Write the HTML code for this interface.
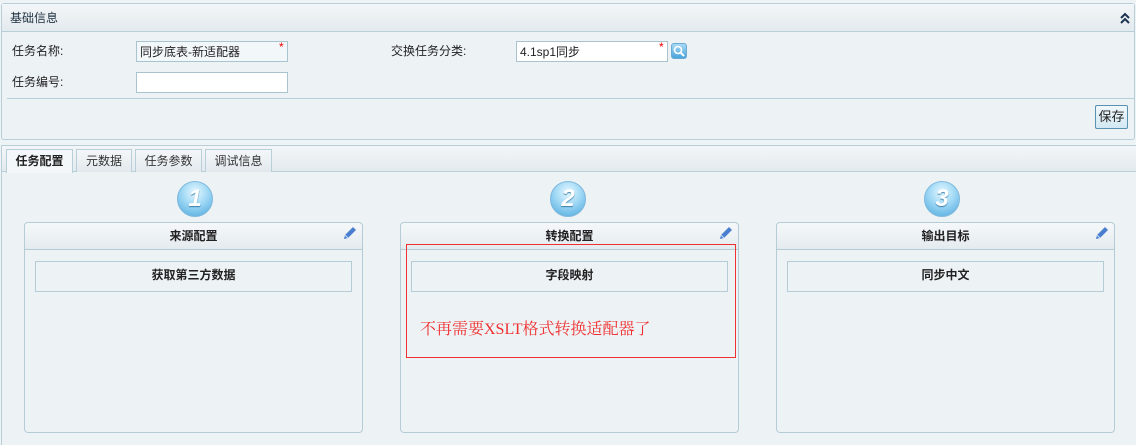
<!DOCTYPE html>
<html><head><meta charset="utf-8"><style>
*{margin:0;padding:0;box-sizing:border-box}
body{width:1136px;height:439px;background:#eef3f6;font-family:"Liberation Sans","Noto Sans CJK SC",sans-serif;font-size:12px;color:#222;position:relative;overflow:hidden}
.abs{position:absolute}
.p1{left:1px;top:3px;width:1134px;height:137px;border:1px solid #b8ced8;border-radius:3px;background:#edf2f5}
.hd{left:0;top:0;width:100%;height:28px;background:linear-gradient(#f3f6f8,#e3eaee);border-bottom:1px solid #b8ced8}
input{position:absolute;border:1px solid #a9c3cf;background:#fff;height:21px;font:12px "Liberation Sans","Noto Sans CJK SC",sans-serif;padding-left:3px;color:#222}
.star{color:#e00;font-size:12px}
.p2{left:1px;top:145px;width:1136px;height:300px;border-top:1px solid #b8ced8;border-left:1px solid #b8ced8;background:#edf2f5}
.tabbar{left:0;top:0;width:100%;height:26px;background:linear-gradient(#f3f6f8,#e3eaee);border-bottom:1px solid #b8ced8}
.tab{top:3px;height:23px;border:1px solid #b8ced8;border-bottom:none;background:linear-gradient(#f4f7f9,#e2e9ed);text-align:center;line-height:22px;color:#333}
.tab.on{background:#f4f7f9;height:24px;font-weight:bold;color:#222}
.box{top:222px;width:339px;height:211px;border:1px solid #b5ccd6;border-radius:4px;background:#edf2f5}
.bh{left:0;top:0;width:100%;height:27px;background:linear-gradient(#f5f8f9,#e4ebef);border-bottom:1px solid #b5ccd6;text-align:center;line-height:27px;font-weight:bold;border-radius:4px 4px 0 0}
.ib{left:10px;top:38px;width:317px;height:31px;border:1px solid #b5ccd6;text-align:center;line-height:19px;font-weight:bold;padding-top:0}
.circ{width:36px;height:36px;border-radius:50%;background:radial-gradient(circle at 50% 30%,#e6f8ff 0%,#9fd8f5 45%,#4aa6dc 100%);border:1px solid #7fb9dc;color:#fff;font:italic bold 24px "Liberation Sans",sans-serif;text-align:center;line-height:34px;text-shadow:0 1px 1px #3a7fa8}
</style></head><body>
<div class="abs p1">
 <div class="abs hd"><span class="abs" style="left:8px;top:5px;font-size:12px;color:#1e3040">基础信息</span>
  <svg class="abs" style="left:1117px;top:8px" width="12" height="12" viewBox="0 0 12 12"><path d="M2 6 L6 2 L10 6 M2 11 L6 7 L10 11" stroke="#1c3050" stroke-width="2" fill="none"/></svg></div>
 <span class="abs" style="left:10px;top:38px">任务名称:</span>
 <span class="abs" style="left:10px;top:69px">任务编号:</span>
 <span class="abs" style="left:389px;top:38px">交换任务分类:</span>
 <input style="left:134px;top:37px;width:152px;background:#f2f7fa" value="同步底表-新适配器"><span class="abs star" style="left:277px;top:36px">*</span>
 <input style="left:134px;top:68px;width:152px" value="">
 <input style="left:514px;top:37px;width:152px" value="4.1sp1同步"><span class="abs star" style="left:657px;top:36px">*</span>
 <div class="abs" style="left:669px;top:39px;width:16px;height:16px;border-radius:3px;background:linear-gradient(#a9dbf5,#4aa3dc);border:1px solid #6aaad4"><svg width="14" height="14" viewBox="0 0 14 14"><circle cx="6" cy="6" r="3.5" stroke="#fff" stroke-width="1.6" fill="none"/><path d="M8.5 8.5 L12 12" stroke="#fff" stroke-width="2"/></svg></div>
 <div class="abs" style="left:5px;top:94px;width:1127px;border-top:1px solid #b8ced8"></div>
 <div class="abs" style="left:1093px;top:101px;width:33px;height:24px;border:1px solid #5a90b0;border-radius:2px;background:linear-gradient(#f0f8fc,#d3e8f3);text-align:center;line-height:22px;font-size:13px;color:#222">保存</div>
</div>
<div class="abs p2">
 <div class="abs tabbar"></div>
 <div class="abs tab on" style="left:4px;width:67px">任务配置</div>
 <div class="abs tab" style="left:74px;width:56px">元数据</div>
 <div class="abs tab" style="left:133px;width:67px">任务参数</div>
 <div class="abs tab" style="left:203px;width:67px">调试信息</div>
</div>
<div class="abs circ" style="left:177px;top:181px">1</div>
<div class="abs circ" style="left:550px;top:181px">2</div>
<div class="abs circ" style="left:924px;top:181px">3</div>
<div class="abs box" style="left:24px"><div class="abs bh">来源配置</div><div class="abs ib" style="padding-top:4px">获取第三方数据</div></div>
<div class="abs box" style="left:400px"><div class="abs bh">转换配置</div><div class="abs ib" style="padding-top:4px">字段映射</div></div>
<div class="abs box" style="left:776px"><div class="abs bh">输出目标</div><div class="abs ib" style="padding-top:4px">同步中文</div></div>
<svg class="abs" style="left:342px;top:225px" width="16" height="16" viewBox="0 0 16 16"><path d="M2 14 L3 10 L11 2 L14 5 L6 13 Z" fill="#4a7fd0"/><path d="M3 10 L6 13" stroke="#cfe0f5" stroke-width="1"/></svg>
<svg class="abs" style="left:718px;top:225px" width="16" height="16" viewBox="0 0 16 16"><path d="M2 14 L3 10 L11 2 L14 5 L6 13 Z" fill="#4a7fd0"/><path d="M3 10 L6 13" stroke="#cfe0f5" stroke-width="1"/></svg>
<svg class="abs" style="left:1094px;top:225px" width="16" height="16" viewBox="0 0 16 16"><path d="M2 14 L3 10 L11 2 L14 5 L6 13 Z" fill="#4a7fd0"/><path d="M3 10 L6 13" stroke="#cfe0f5" stroke-width="1"/></svg>
<div class="abs" style="left:406px;top:244px;width:330px;height:114px;border:1px solid #f03030"></div>
<div class="abs" style="left:420px;top:316px;color:#f03030;font-size:16px;font-family:'Liberation Serif','Noto Serif CJK SC',serif">不再需要XSLT格式转换适配器了</div>
</body></html>
